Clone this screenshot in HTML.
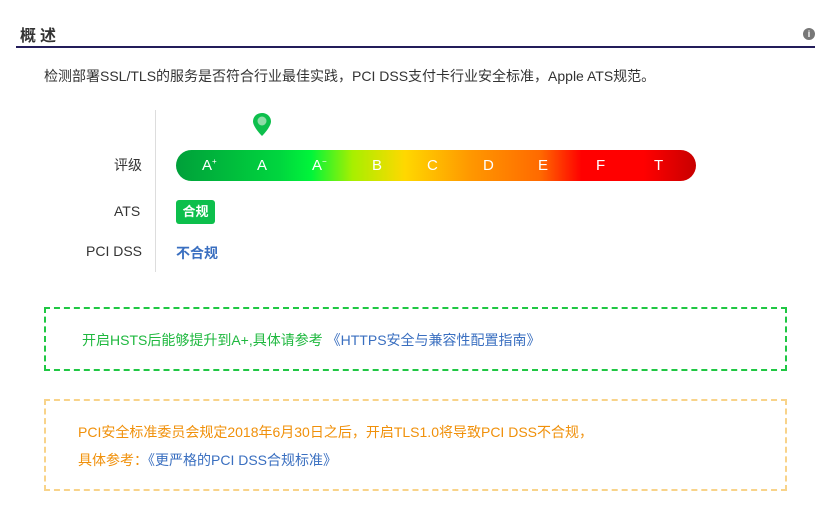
<!DOCTYPE html>
<html><head><meta charset="utf-8"><style>
body{margin:0;width:840px;height:509px;background:#fff;font-family:"Liberation Sans","Noto Sans CJK SC",sans-serif;position:relative;overflow:hidden}
.a{position:absolute;white-space:nowrap}
.s{position:relative;top:-6px;font-size:8px}
</style></head><body>
<div class="a" style="left:20px;top:22px;font-size:16px;font-weight:bold;color:#333;letter-spacing:4px">概述</div>
<div class="a" style="left:803px;top:28px;width:12px;height:12px;border-radius:50%;background:#777;color:#fff;font-size:9px;font-weight:bold;text-align:center;line-height:12px">i</div>
<div class="a" style="left:16px;top:46px;width:799px;height:2px;background:#231d5a"></div>
<div class="a" style="left:44px;top:66px;font-size:14px;color:#333">检测部署SSL/TLS的服务是否符合行业最佳实践，PCI DSS支付卡行业安全标准，Apple ATS规范。</div>
<div class="a" style="left:155px;top:110px;width:1px;height:162px;background:#ddd"></div>
<div class="a" style="left:114px;top:155px;font-size:14px;color:#333">评级</div>
<div class="a" style="left:114px;top:203px;font-size:14px;color:#333">ATS</div>
<div class="a" style="left:86px;top:243px;font-size:14px;color:#333">PCI DSS</div>
<svg class="a" style="left:250px;top:112px" width="24" height="30" viewBox="0 0 24 30"><path d="M12 1C6.5 1 3 5 3 9.5 3 15 12 24 12 24S21 15 21 9.5C21 5 17.5 1 12 1Z" fill="#0dbf4c"/><circle cx="12" cy="9" r="4.5" fill="#8fdca8"/></svg>
<div class="a" style="left:176px;top:150px;width:520px;height:31px;border-radius:16px;background:linear-gradient(90deg,#00a03a 0%,#00d63e 20%,#00f53a 26%,#a8ef00 34%,#ffd800 44%,#ff9a00 56%,#ff6a00 70%,#ff0000 78%,#ff0000 90%,#c80000 100%);color:#fff;font-size:15px;line-height:31px">
<span class="a" style="left:26px">A<span class="s">+</span></span><span class="a" style="left:81px">A</span><span class="a" style="left:136px">A<span class="s">−</span></span><span class="a" style="left:196px">B</span><span class="a" style="left:251px">C</span><span class="a" style="left:307px">D</span><span class="a" style="left:362px">E</span><span class="a" style="left:420px">F</span><span class="a" style="left:478px">T</span></div>
<div class="a" style="left:176px;top:200px;width:39px;height:24px;border-radius:3px;background:#0dbf4c;color:#fff;font-size:13px;font-weight:bold;text-align:center;line-height:24px">合规</div>
<div class="a" style="left:176px;top:243px;font-size:14px;font-weight:bold;color:#3a6fc0">不合规</div>
<div class="a" style="left:44px;top:307px;width:739px;height:60px;border:2px dashed #1fc743"></div>
<div class="a" style="left:82px;top:330px;font-size:14px;color:#1fb83f">开启HSTS后能够提升到A+,具体请参考 <span style="color:#3a6fc0">《HTTPS安全与兼容性配置指南》</span></div>
<div class="a" style="left:44px;top:399px;width:739px;height:88px;border:2px dashed #f8d38a"></div>
<div class="a" style="left:78px;top:422px;font-size:14px;color:#f0900a">PCI安全标准委员会规定2018年6月30日之后，开启TLS1.0将导致PCI DSS不合规，</div>
<div class="a" style="left:78px;top:450px;font-size:14px;color:#f0900a">具体参考：<span style="color:#3a6fc0">《更严格的PCI DSS合规标准》</span></div>
</body></html>
